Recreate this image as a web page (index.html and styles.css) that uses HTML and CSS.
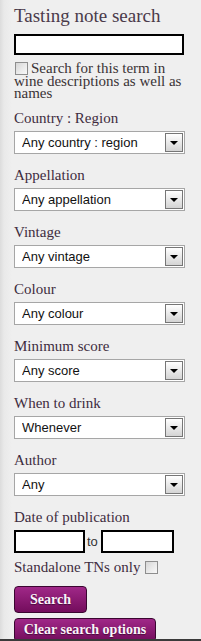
FILE: index.html
```html
<!DOCTYPE html>
<html>
<head>
<meta charset="utf-8">
<title>Tasting note search</title>
<link rel="stylesheet" href="styles.css">
</head>
<body>
<div class="panel">
  <form class="search">
    <h2 class="title">Tasting note search</h2>
    <input type="text" class="term">
    <label class="desc"><input type="checkbox" class="cb cb-lead">Search for this term in wine descriptions as well as names</label>

    <div class="field field-first">
      <div class="lbl">Country : Region</div>
      <div class="sel"><select><option>Any country : region</option></select><span class="arrow"></span></div>
    </div>
    <div class="field">
      <div class="lbl">Appellation</div>
      <div class="sel"><select><option>Any appellation</option></select><span class="arrow"></span></div>
    </div>
    <div class="field">
      <div class="lbl">Vintage</div>
      <div class="sel"><select><option>Any vintage</option></select><span class="arrow"></span></div>
    </div>
    <div class="field">
      <div class="lbl">Colour</div>
      <div class="sel"><select><option>Any colour</option></select><span class="arrow"></span></div>
    </div>
    <div class="field">
      <div class="lbl">Minimum score</div>
      <div class="sel"><select><option>Any score</option></select><span class="arrow"></span></div>
    </div>
    <div class="field">
      <div class="lbl">When to drink</div>
      <div class="sel"><select><option>Whenever</option></select><span class="arrow"></span></div>
    </div>
    <div class="field">
      <div class="lbl">Author</div>
      <div class="sel"><select><option>Any</option></select><span class="arrow"></span></div>
    </div>
    <div class="field">
      <div class="lbl">Date of publication</div>
      <div class="dates">
        <input type="text" class="date date-from">
        <span class="to">to</span>
        <input type="text" class="date date-to">
      </div>
    </div>
    <label class="standalone">Standalone TNs only <input type="checkbox" class="cb"></label>
    <button type="button" class="btn btn-search">Search</button>
    <button type="button" class="btn btn-clear">Clear search options</button>
  </form>
</div>
</body>
</html>
```

FILE: styles.css
```css
html, body {
  margin: 0;
  padding: 0;
  background: #efefef;
}

.panel {
  box-sizing: border-box;
  height: 641px;
  overflow: hidden;
  border-bottom: 2px solid #3a3a3a;
  background: linear-gradient(to right, #dcdcdc 0, #e9e9e9 4px, #efefef 12px);
  padding: 5px 0 0 14px;
}

.search {
  margin: 0;
  width: 172px;
}

.title {
  margin: 0;
  font: normal 19px/22px "Liberation Serif", serif;
  color: #4a3a4a;
}

.term {
  display: block;
  box-sizing: border-box;
  margin: 7px 0 0 0;
  width: 170px;
  height: 21px;
  border: 2px solid #000;
  padding: 0;
  background: #fff;
}

.cb {
  appearance: none;
  -webkit-appearance: none;
  box-sizing: border-box;
  display: inline-block;
  width: 13px;
  height: 13px;
  margin: 0;
  border: 1px solid #8e8e8e;
  background: linear-gradient(135deg, #d6d6d6 0%, #ececec 60%, #f8f8f8 100%);
  vertical-align: -2px;
}

.cb-lead {
  margin: 0 3px 0 1px;
}

.desc {
  display: block;
  margin-top: 7px;
  font: 15px/12px "Liberation Serif", serif;
  color: #3a3336;
}

.field {
  margin-top: 12px;
}

.field-first {
  margin-top: 10px;
}

.lbl {
  font: 15px/18px "Liberation Serif", serif;
  color: #3e2c3e;
  margin-bottom: 4px;
}

.sel {
  display: flex;
  box-sizing: border-box;
  width: 171px;
  height: 23px;
  border: 1px solid #a6a6a6;
  padding: 1px;
  background: #fff;
}

.sel select {
  flex: 1;
  min-width: 0;
  appearance: none;
  -webkit-appearance: none;
  border: 0;
  margin: 0;
  padding: 0 0 0 6px;
  background: transparent;
  font: 13px "Liberation Sans", Arial, sans-serif;
  color: #111;
  outline: none;
}

.arrow {
  box-sizing: border-box;
  width: 18px;
  border: 1px solid #767676;
  background: linear-gradient(#ffffff, #d4d4d4);
  display: flex;
  align-items: center;
  justify-content: center;
}

.arrow::before {
  content: "";
  border-left: 4px solid transparent;
  border-right: 4px solid transparent;
  border-top: 4px solid #000;
}

.dates {
  display: flex;
  align-items: center;
}

.date {
  box-sizing: border-box;
  height: 23px;
  border: 2px solid #000;
  padding: 0;
  margin: 0;
  background: #fff;
}

.date-from {
  width: 71px;
}

.date-to {
  width: 73px;
}

.to {
  font: 13px "Liberation Sans", Arial, sans-serif;
  color: #333;
  margin: 0 3px 0 2px;
}

.standalone {
  display: block;
  margin-top: 5px;
  font: 15px/18px "Liberation Serif", serif;
  color: #3e2c3e;
}

.standalone .cb {
  margin-left: 1px;
}

.btn {
  display: block;
  box-sizing: border-box;
  margin: 0;
  padding: 0;
  border: 1px solid #3a0630;
  border-radius: 4px;
  background: linear-gradient(#a02888, #8a1a72 50%, #730d5c);
  color: #fbf3f9;
  font: bold 14px "Liberation Serif", serif;
  text-shadow: 0 1px 1px rgba(0, 0, 0, 0.45);
  text-align: center;
}

.btn-search {
  margin-top: 10px;
  width: 73px;
  height: 27px;
}

.btn-clear {
  margin-top: 5px;
  width: 142px;
  height: 24px;
}
```
